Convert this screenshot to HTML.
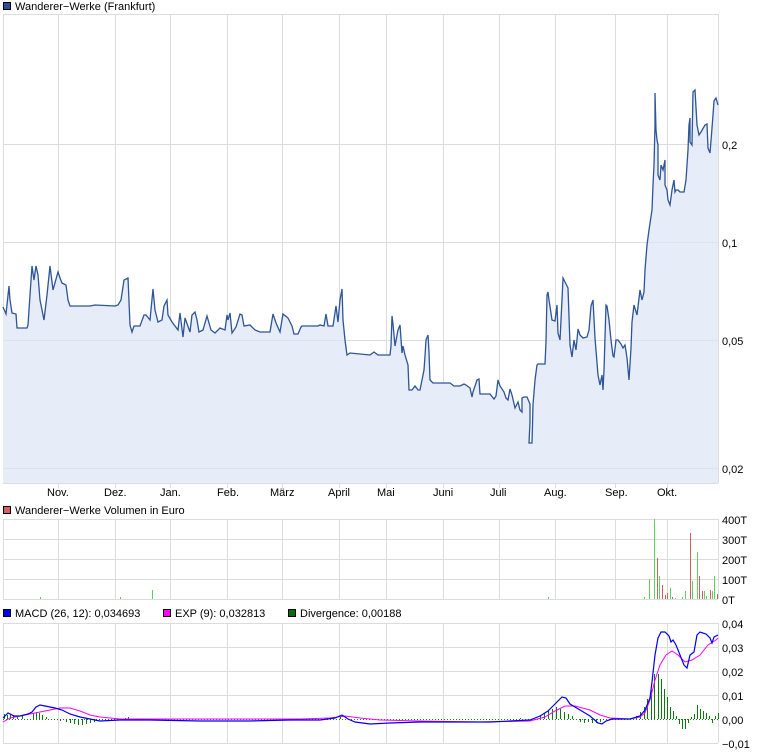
<!DOCTYPE html>
<html><head><meta charset="utf-8"><style>
body{margin:0;background:#fff;}
svg{display:block;font-family:"Liberation Sans",sans-serif;font-size:11px;}
</style></head><body>
<svg width="760" height="752" viewBox="0 0 760 752" xmlns="http://www.w3.org/2000/svg">
<rect width="760" height="752" fill="#fff"/>
<!-- legends -->
<rect x="3.5" y="2.5" width="7" height="7" fill="#2d4f8f" stroke="#000"/>
<text x="15" y="10" fill="#000">Wanderer−Werke (Frankfurt)</text>
<rect x="3.5" y="506.5" width="7" height="7" fill="#d86060" stroke="#000"/>
<text x="15" y="514" fill="#000">Wanderer−Werke Volumen in Euro</text>
<rect x="3.5" y="609.5" width="7" height="7" fill="#0000ee" stroke="#000"/>
<text x="15" y="617" fill="#000">MACD (26, 12): 0,034693</text>
<rect x="163.5" y="609.5" width="7" height="7" fill="#ff00ff" stroke="#000"/>
<text x="175" y="617" fill="#000">EXP (9): 0,032813</text>
<rect x="288.5" y="609.5" width="7" height="7" fill="#007000" stroke="#000"/>
<text x="300" y="617" fill="#000">Divergence: 0,00188</text>

<!-- main grid -->
<g stroke="#dcdcdc" stroke-width="1">
<line x1="3" y1="14.5" x2="718" y2="14.5"/>
<line x1="3" y1="144.5" x2="718" y2="144.5"/>
<line x1="3" y1="242.5" x2="718" y2="242.5"/>
<line x1="3" y1="340.5" x2="718" y2="340.5"/>
<line x1="3" y1="468.5" x2="718" y2="468.5"/>
<g id="vg">
<line x1="3.5" y1="14" x2="3.5" y2="483"/>
<line x1="58.5" y1="14" x2="58.5" y2="488"/>
<line x1="115.5" y1="14" x2="115.5" y2="488"/>
<line x1="170.5" y1="14" x2="170.5" y2="488"/>
<line x1="227.5" y1="14" x2="227.5" y2="488"/>
<line x1="282.5" y1="14" x2="282.5" y2="488"/>
<line x1="339.5" y1="14" x2="339.5" y2="488"/>
<line x1="386.5" y1="14" x2="386.5" y2="488"/>
<line x1="443.5" y1="14" x2="443.5" y2="488"/>
<line x1="499.5" y1="14" x2="499.5" y2="488"/>
<line x1="555.5" y1="14" x2="555.5" y2="488"/>
<line x1="615.5" y1="14" x2="615.5" y2="488"/>
<line x1="667.5" y1="14" x2="667.5" y2="488"/>
</g>
<line x1="718.5" y1="14" x2="718.5" y2="483"/>
<line x1="3" y1="483.5" x2="718" y2="483.5"/>
</g>
<polygon fill="#e6ecf8" points="3,483 3,307 6,314 9,286 10,300 12,313 16,314 17,328 27,328 28,325 30,295 32,266 34,280 36,266 38,275 40,300 44,320 47,295 50,266 53,290 58,272 60,278 62,283 66,285 68,300 70,306 72,306 90,306 95,305 115,306 118,305 121,300 124,280 128,278 130,325 132,332 134,326 140,326 144,315 146,315 150,320 153,289 155,310 158,322 162,320 164,306 167,300 168,315 172,322 178,330 180,313 183,337 185,318 190,332 192,315 195,312 197,320 199,332 203,330 207,316 211,330 215,333 220,328 225,330 227,315 228,320 230,313 232,333 236,327 240,314 242,315 244,326 250,325 255,330 260,332 270,332 273,314 276,323 280,332 283,314 288,318 292,326 294,334 298,334 301,327 302,326 318,326 320,325 324,326 326,314 328,326 333,326 336,306 338,322 340,300 342,289 343,320 345,340 347,355 350,353 370,355 374,352 378,355 390,355 391,346 392,316 393,324 395,346 398,330 400,325 402,353 403,346 405,355 408,365 409,390 412,390 415,386 418,390 420,390 422,380 424,370 425,356 426,340 428,335 429,352 430,380 433,383 450,383 454,386 460,386 464,384 466,385 470,388 472,397 473,392 477,380 479,379 480,394 483,394 490,394 494,399 496,396 498,380 500,386 504,392 506,398 508,400 510,389 512,395 515,408 518,402 520,410 522,412 522,398 524,397 527,397 530,404 530,422 529,443 532,443 533,405 535,380 537,365 538,364 545,364 546,342 547,295 548,292 549,300 552,320 555,321 557,305 558,333 560,340 562,300 563,278 566,284 568,288 570,345 572,357 574,340 576,350 578,329 580,335 583,338 587,337 589,330 591,306 593,300 595,338 598,375 600,385 602,375 603,390 604,370 606,305 607,306 609,320 611,340 613,356 614,357 616,340 618,340 621,344 623,348 625,345 627,358 629,380 631,348 632,322 634,305 637,315 640,290 642,300 644,292 645,270 647,245 649,230 652,210 653,185 654,165 655,125 655,93 656,130 657,140 658,145 658,175 660,180 661,165 663,170 665,160 665,185 667,190 668,200 670,205 672,190 674,180 675,192 676,190 678,190 680,192 684,192 686,180 688,150 689,125 690,118 690,142 692,145 693,92 695,90 697,125 699,135 701,132 705,125 707,124 708,148 710,153 712,128 713,115 714,101 716,98 718,105 718,483"/>
<g stroke="#dcdcdc" opacity="0.6">
<line x1="3" y1="340.5" x2="718" y2="340.5"/><line x1="3" y1="468.5" x2="718" y2="468.5"/><line x1="3" y1="242.5" x2="718" y2="242.5"/><line x1="3" y1="144.5" x2="718" y2="144.5"/>
</g>
<use href="#vg" opacity="0.4"/>
<polyline fill="none" stroke="#2d5597" stroke-width="1.3" points="3,307 6,314 9,286 10,300 12,313 16,314 17,328 27,328 28,325 30,295 32,266 34,280 36,266 38,275 40,300 44,320 47,295 50,266 53,290 58,272 60,278 62,283 66,285 68,300 70,306 72,306 90,306 95,305 115,306 118,305 121,300 124,280 128,278 130,325 132,332 134,326 140,326 144,315 146,315 150,320 153,289 155,310 158,322 162,320 164,306 167,300 168,315 172,322 178,330 180,313 183,337 185,318 190,332 192,315 195,312 197,320 199,332 203,330 207,316 211,330 215,333 220,328 225,330 227,315 228,320 230,313 232,333 236,327 240,314 242,315 244,326 250,325 255,330 260,332 270,332 273,314 276,323 280,332 283,314 288,318 292,326 294,334 298,334 301,327 302,326 318,326 320,325 324,326 326,314 328,326 333,326 336,306 338,322 340,300 342,289 343,320 345,340 347,355 350,353 370,355 374,352 378,355 390,355 391,346 392,316 393,324 395,346 398,330 400,325 402,353 403,346 405,355 408,365 409,390 412,390 415,386 418,390 420,390 422,380 424,370 425,356 426,340 428,335 429,352 430,380 433,383 450,383 454,386 460,386 464,384 466,385 470,388 472,397 473,392 477,380 479,379 480,394 483,394 490,394 494,399 496,396 498,380 500,386 504,392 506,398 508,400 510,389 512,395 515,408 518,402 520,410 522,412 522,398 524,397 527,397 530,404 530,422 529,443 532,443 533,405 535,380 537,365 538,364 545,364 546,342 547,295 548,292 549,300 552,320 555,321 557,305 558,333 560,340 562,300 563,278 566,284 568,288 570,345 572,357 574,340 576,350 578,329 580,335 583,338 587,337 589,330 591,306 593,300 595,338 598,375 600,385 602,375 603,390 604,370 606,305 607,306 609,320 611,340 613,356 614,357 616,340 618,340 621,344 623,348 625,345 627,358 629,380 631,348 632,322 634,305 637,315 640,290 642,300 644,292 645,270 647,245 649,230 652,210 653,185 654,165 655,125 655,93 656,130 657,140 658,145 658,175 660,180 661,165 663,170 665,160 665,185 667,190 668,200 670,205 672,190 674,180 675,192 676,190 678,190 680,192 684,192 686,180 688,150 689,125 690,118 690,142 692,145 693,92 695,90 697,125 699,135 701,132 705,125 707,124 708,148 710,153 712,128 713,115 714,101 716,98 718,105"/>
<g fill="#000">
<text x="722" y="149">0,2</text><text x="722" y="247">0,1</text><text x="722" y="345">0,05</text><text x="722" y="473">0,02</text>
<text x="47" y="496">Nov.</text><text x="104" y="496">Dez.</text><text x="160" y="496">Jan.</text><text x="217" y="496">Feb.</text><text x="270" y="496">März</text><text x="328" y="496">April</text><text x="377" y="496">Mai</text><text x="433" y="496">Juni</text><text x="490" y="496">Juli</text><text x="544" y="496">Aug.</text><text x="605" y="496">Sep.</text><text x="657" y="496">Okt.</text>
</g>

<!-- volume -->
<g stroke="#dcdcdc">
<line x1="3" y1="519.5" x2="718" y2="519.5"/><line x1="3" y1="539.5" x2="718" y2="539.5"/><line x1="3" y1="559.5" x2="718" y2="559.5"/><line x1="3" y1="579.5" x2="718" y2="579.5"/><line x1="3" y1="599.5" x2="718" y2="599.5"/>
<line x1="3.5" y1="519" x2="3.5" y2="599"/><line x1="58.5" y1="519" x2="58.5" y2="599"/><line x1="115.5" y1="519" x2="115.5" y2="599"/><line x1="170.5" y1="519" x2="170.5" y2="599"/><line x1="227.5" y1="519" x2="227.5" y2="599"/><line x1="282.5" y1="519" x2="282.5" y2="599"/><line x1="339.5" y1="519" x2="339.5" y2="599"/><line x1="386.5" y1="519" x2="386.5" y2="599"/><line x1="443.5" y1="519" x2="443.5" y2="599"/><line x1="499.5" y1="519" x2="499.5" y2="599"/><line x1="555.5" y1="519" x2="555.5" y2="599"/><line x1="615.5" y1="519" x2="615.5" y2="599"/><line x1="667.5" y1="519" x2="667.5" y2="599"/><line x1="718.5" y1="519" x2="718.5" y2="599"/>
</g>
<g stroke="#5bd35b" stroke-width="1">
<line x1="644.5" y1="599" x2="644.5" y2="597"/><line x1="649.5" y1="599" x2="649.5" y2="579"/><line x1="654.5" y1="599" x2="654.5" y2="519"/><line x1="659.5" y1="599" x2="659.5" y2="576"/><line x1="670.5" y1="599" x2="670.5" y2="588"/><line x1="675.5" y1="599" x2="675.5" y2="598"/><line x1="682.5" y1="599" x2="682.5" y2="597"/><line x1="685.5" y1="599" x2="685.5" y2="591"/><line x1="692.5" y1="599" x2="692.5" y2="581"/><line x1="697.5" y1="599" x2="697.5" y2="552"/><line x1="704.5" y1="599" x2="704.5" y2="591"/><line x1="706.5" y1="599" x2="706.5" y2="596"/><line x1="712.5" y1="599" x2="712.5" y2="591"/><line x1="714.5" y1="599" x2="714.5" y2="576"/>
<line x1="40.5" y1="599" x2="40.5" y2="597"/><line x1="152.5" y1="599" x2="152.5" y2="590"/><line x1="120.5" y1="599" x2="120.5" y2="597"/><line x1="548.5" y1="599" x2="548.5" y2="597"/>
</g>
<g stroke="#d06060" stroke-width="1">
<line x1="657.5" y1="599" x2="657.5" y2="558"/><line x1="662.5" y1="599" x2="662.5" y2="585"/><line x1="665.5" y1="599" x2="665.5" y2="595"/><line x1="667.5" y1="599" x2="667.5" y2="593"/><line x1="672.5" y1="599" x2="672.5" y2="597"/><line x1="690.5" y1="599" x2="690.5" y2="533"/><line x1="699.5" y1="599" x2="699.5" y2="576"/><line x1="702.5" y1="599" x2="702.5" y2="591"/><line x1="710.5" y1="599" x2="710.5" y2="590"/><line x1="717.5" y1="599" x2="717.5" y2="594"/>
</g>
<g fill="#000">
<text x="722" y="524">400T</text><text x="722" y="544">300T</text><text x="722" y="564">200T</text><text x="722" y="584">100T</text><text x="722" y="604">0T</text>
</g>

<!-- MACD -->
<g stroke="#dcdcdc">
<line x1="3" y1="623.5" x2="718" y2="623.5"/><line x1="3" y1="647.5" x2="718" y2="647.5"/><line x1="3" y1="671.5" x2="718" y2="671.5"/><line x1="3" y1="695.5" x2="718" y2="695.5"/><line x1="3" y1="743.5" x2="718" y2="743.5"/>
<line x1="3.5" y1="623" x2="3.5" y2="743"/><line x1="58.5" y1="623" x2="58.5" y2="743"/><line x1="115.5" y1="623" x2="115.5" y2="743"/><line x1="170.5" y1="623" x2="170.5" y2="743"/><line x1="227.5" y1="623" x2="227.5" y2="743"/><line x1="282.5" y1="623" x2="282.5" y2="743"/><line x1="339.5" y1="623" x2="339.5" y2="743"/><line x1="386.5" y1="623" x2="386.5" y2="743"/><line x1="443.5" y1="623" x2="443.5" y2="743"/><line x1="499.5" y1="623" x2="499.5" y2="743"/><line x1="555.5" y1="623" x2="555.5" y2="743"/><line x1="615.5" y1="623" x2="615.5" y2="743"/><line x1="667.5" y1="623" x2="667.5" y2="743"/><line x1="718.5" y1="623" x2="718.5" y2="743"/>
</g>
<line x1="3" y1="719.5" x2="718" y2="719.5" stroke="#208020" stroke-dasharray="1,2"/>
<path stroke="#0a7a0a" stroke-width="1" fill="none" d="M4.5 719v-5M7.5 719v-4M10.5 719v-5M13.5 719v-4M17.5 719v-3M22.5 719v-3M33.5 719v-6M36.5 719v-7M39.5 719v-6M42.5 719v-4M46.5 719v-2M60.5 719v2M66.5 719v3M70.5 719v4M74.5 719v5M78.5 719v6M82.5 719v6M86.5 719v5M90.5 719v4M94.5 719v3M125.5 719v-1M128.5 719v-2M340.5 719v-2M520.5 719v-1M540.5 719v-3M544.5 719v-6M548.5 719v-8M552.5 719v-10M556.5 719v-12M560.5 719v-10M564.5 719v-7M568.5 719v-5M572.5 719v-3M580.5 719v3M584.5 719v4M588.5 719v3M592.5 719v4M596.5 719v4M600.5 719v3M620.5 719v-1M636.5 719v-3M640.5 719v-7M644.5 719v-12M647.5 719v-20M651.5 719v-29M654.5 719v-45M658.5 719v-45M661.5 719v-40M664.5 719v-30M667.5 719v-22M670.5 719v-12M673.5 719v-8M676.5 719v-3M679.5 719v5M682.5 719v10M685.5 719v10M688.5 719v4M691.5 719v-2M694.5 719v-5M697.5 719v-14M700.5 719v-10M703.5 719v-8M706.5 719v-6M709.5 719v-3M712.5 719v4M715.5 719v-3M718.5 719v-6"/>
<polyline fill="none" stroke="#ff00ff" stroke-width="1" points="3,722 10,718 20,716 30,714 40,712 50,710 60,708 70,708 80,711 90,715 100,717 120,719 200,719 250,719 300,719 330,718 345,716 360,718 380,720 420,721 480,722 530,721 545,717 555,711 565,706 575,706 590,710 600,715 610,718 630,719 640,717 645,713 650,700 655,680 660,665 666,655 672,651 678,655 685,662 692,660 700,655 708,645 716,640 718,638"/>
<polyline fill="none" stroke="#0000ee" stroke-width="1.2" points="3,718 8,713 14,716 20,716 28,714 32,712 36,707 40,705 45,706 50,707 55,708 62,710 70,714 80,717 90,719 100,721 120,720 150,720 200,721 250,721 290,720 320,720 335,718 342,715 348,719 355,722 370,724 390,723 420,722 460,722 490,722 510,721 530,720 540,716 548,711 555,704 562,697 566,698 570,704 580,710 590,716 598,723 602,724 606,721 612,719 630,719 640,716 645,710 650,698 652,682 655,655 658,638 661,632 665,632 669,636 671,642 673,640 676,645 680,655 684,665 687,668 690,655 694,652 697,635 700,632 706,634 710,638 712,643 714,637 718,635"/>
<g fill="#000">
<text x="722" y="628">0,04</text><text x="722" y="652">0,03</text><text x="722" y="676">0,02</text><text x="722" y="700">0,01</text><text x="722" y="724">0,00</text><text x="722" y="748">−0,01</text>
</g>
</svg>
</body></html>
